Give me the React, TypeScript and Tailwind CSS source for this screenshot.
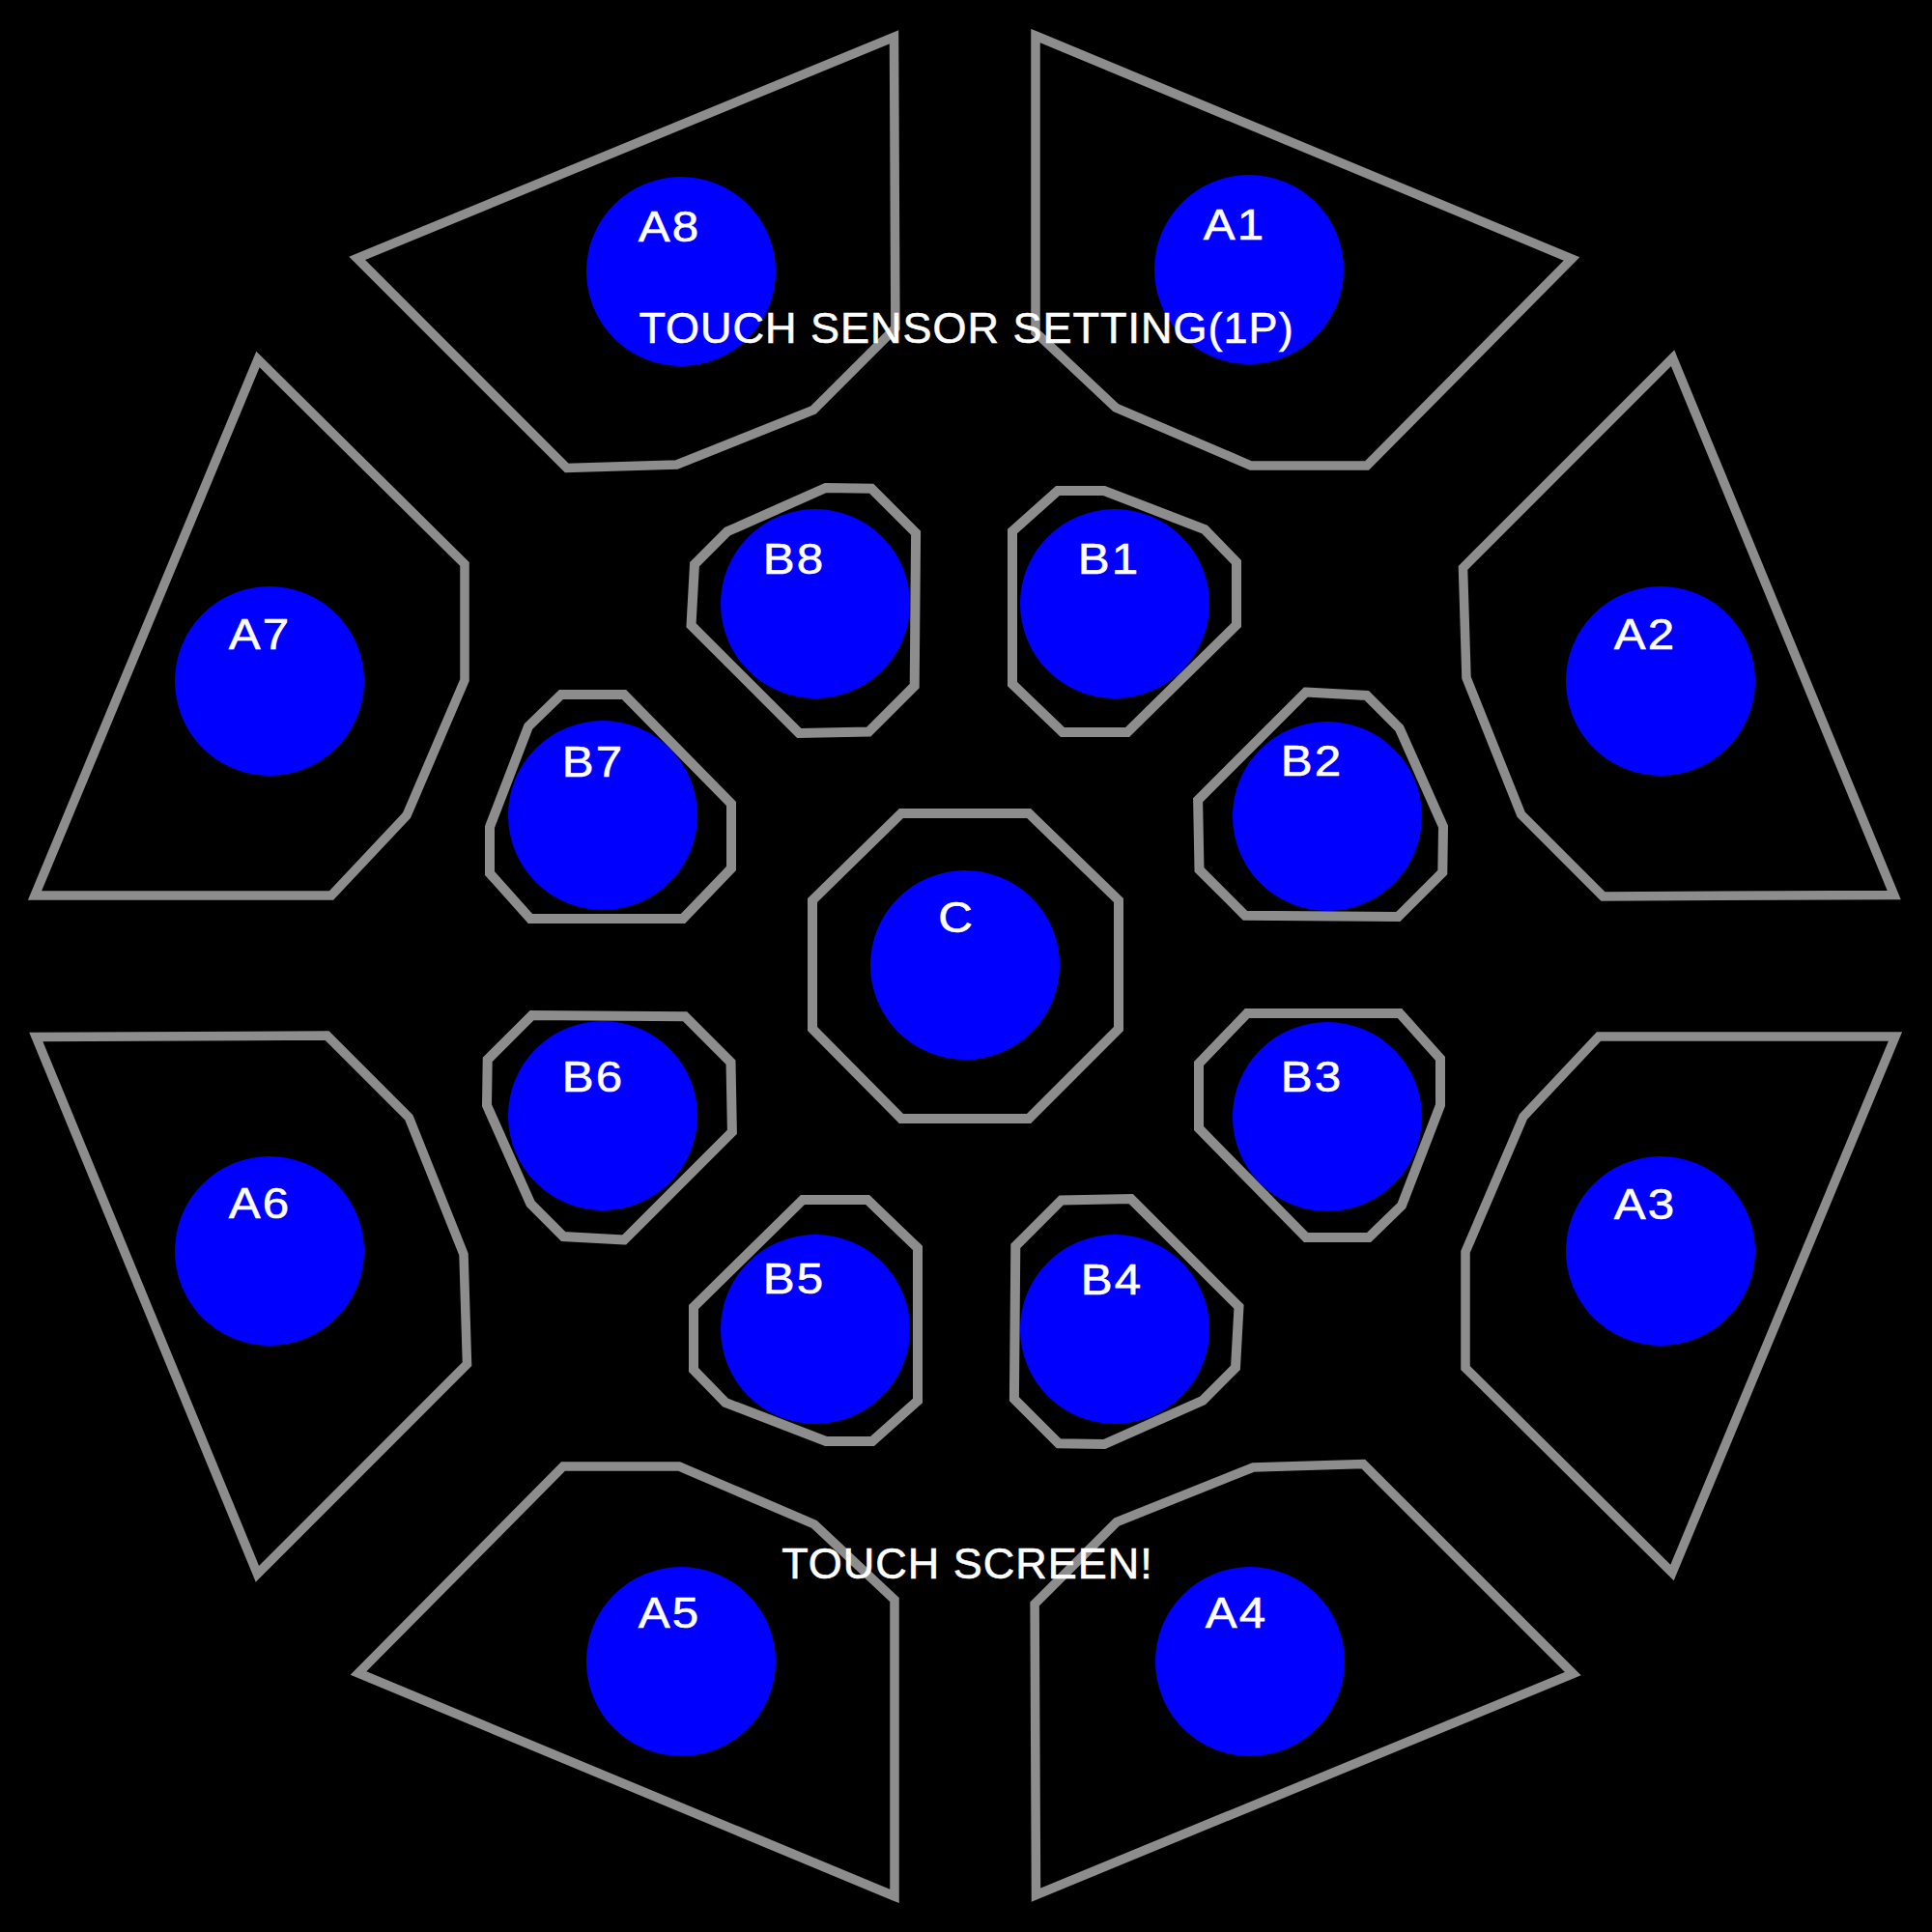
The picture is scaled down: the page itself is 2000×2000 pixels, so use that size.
import React from "react";

const CX = 999;
const CY = 1000;

const A1: [number, number][] = [
  [73, -963],
  [628, -732],
  [416, -518],
  [296, -518],
  [156, -578],
  [73, -656],
];

const B1: [number, number][] = [
  [49, -450],
  [96, -492],
  [144, -492],
  [248, -452],
  [281, -418],
  [281, -353],
  [168, -242],
  [101, -242],
  [49, -292],
];

const C_OCT = "933,842 1065,842 1158,932 1158,1065 1065,1158 933,1158 841,1065 841,932";

function rotPts(pts: [number, number][], k: number): string {
  const t = (k * Math.PI) / 4;
  const c = Math.cos(t);
  const s = Math.sin(t);
  return pts
    .map(([x, y]) => `${(CX + x * c - y * s).toFixed(1)},${(CY + x * s + y * c).toFixed(1)}`)
    .join(" ");
}

type Pad = { name: string; cx: number; cy: number; pos: string };

const pads: Pad[] = [
  { name: "A1", cx: 1293, cy: 279, pos: "left-[1277px] top-[233px]" },
  { name: "A2", cx: 1719, cy: 705, pos: "left-[1702px] top-[657px]" },
  { name: "A3", cx: 1719, cy: 1295, pos: "left-[1702px] top-[1247px]" },
  { name: "A4", cx: 1294, cy: 1720, pos: "left-[1279px] top-[1670px]" },
  { name: "A5", cx: 705, cy: 1720, pos: "left-[692px] top-[1670px]" },
  { name: "A6", cx: 279, cy: 1295, pos: "left-[268px] top-[1246px]" },
  { name: "A7", cx: 279, cy: 705, pos: "left-[268px] top-[657px]" },
  { name: "A8", cx: 705, cy: 281, pos: "left-[692px] top-[235px]" },
  { name: "B1", cx: 1154, cy: 625, pos: "left-[1147px] top-[579px]" },
  { name: "B2", cx: 1374, cy: 845, pos: "left-[1357px] top-[788px]" },
  { name: "B3", cx: 1374, cy: 1156, pos: "left-[1357px] top-[1115px]" },
  { name: "B4", cx: 1154, cy: 1376, pos: "left-[1150px] top-[1325px]" },
  { name: "B5", cx: 844, cy: 1376, pos: "left-[821px] top-[1324px]" },
  { name: "B6", cx: 624, cy: 1155, pos: "left-[613px] top-[1115px]" },
  { name: "B7", cx: 624, cy: 844, pos: "left-[613px] top-[789px]" },
  { name: "B8", cx: 844, cy: 625, pos: "left-[821px] top-[579px]" },
  { name: "C", cx: 999, cy: 999, pos: "left-[989px] top-[950px]" },
];

const ks = [0, 1, 2, 3, 4, 5, 6, 7];

export default function App() {
  return (
    <div className="relative w-[2000px] h-[2000px] bg-black overflow-hidden font-['Liberation_Sans',Arial,sans-serif] text-white">
      <svg width="2000" height="2000" viewBox="0 0 2000 2000" className="absolute left-0 top-0">
        <g fill="none" stroke="#8d8d8d">
          {ks.map((k) => (
            <polygon key={"a" + k} points={rotPts(A1, k)} strokeWidth={9.5} />
          ))}
          {ks.map((k) => (
            <polygon key={"b" + k} points={rotPts(B1, k)} strokeWidth={10} />
          ))}
          <polygon points={C_OCT} strokeWidth={10} />
        </g>
        <g fill="#0000ff">
          {pads.map((p) => (
            <circle key={"c" + p.name} cx={p.cx} cy={p.cy} r={98} />
          ))}
        </g>
      </svg>

      {pads.map((p) => (
        <div
          key={"l" + p.name}
          className={
            "absolute -translate-x-1/2 -translate-y-1/2 scale-x-[1.12] whitespace-nowrap text-[44px] leading-none tracking-[2px] pl-[2px] [-webkit-text-stroke:0.6px_#ffffff] " +
            p.pos
          }
        >
          {p.name}
        </div>
      ))}

      <div className="absolute left-[1000px] top-[339px] -translate-x-1/2 -translate-y-1/2 whitespace-nowrap text-[45px] leading-none tracking-[1px] pl-[1px] [-webkit-text-stroke:0.6px_#ffffff]">
        TOUCH SENSOR SETTING(1P)
      </div>
      <div className="absolute left-[1001px] top-[1618px] -translate-x-1/2 -translate-y-1/2 whitespace-nowrap text-[45px] leading-none tracking-[1px] pl-[1px] [-webkit-text-stroke:0.6px_#ffffff]">
        TOUCH SCREEN!
      </div>
    </div>
  );
}
